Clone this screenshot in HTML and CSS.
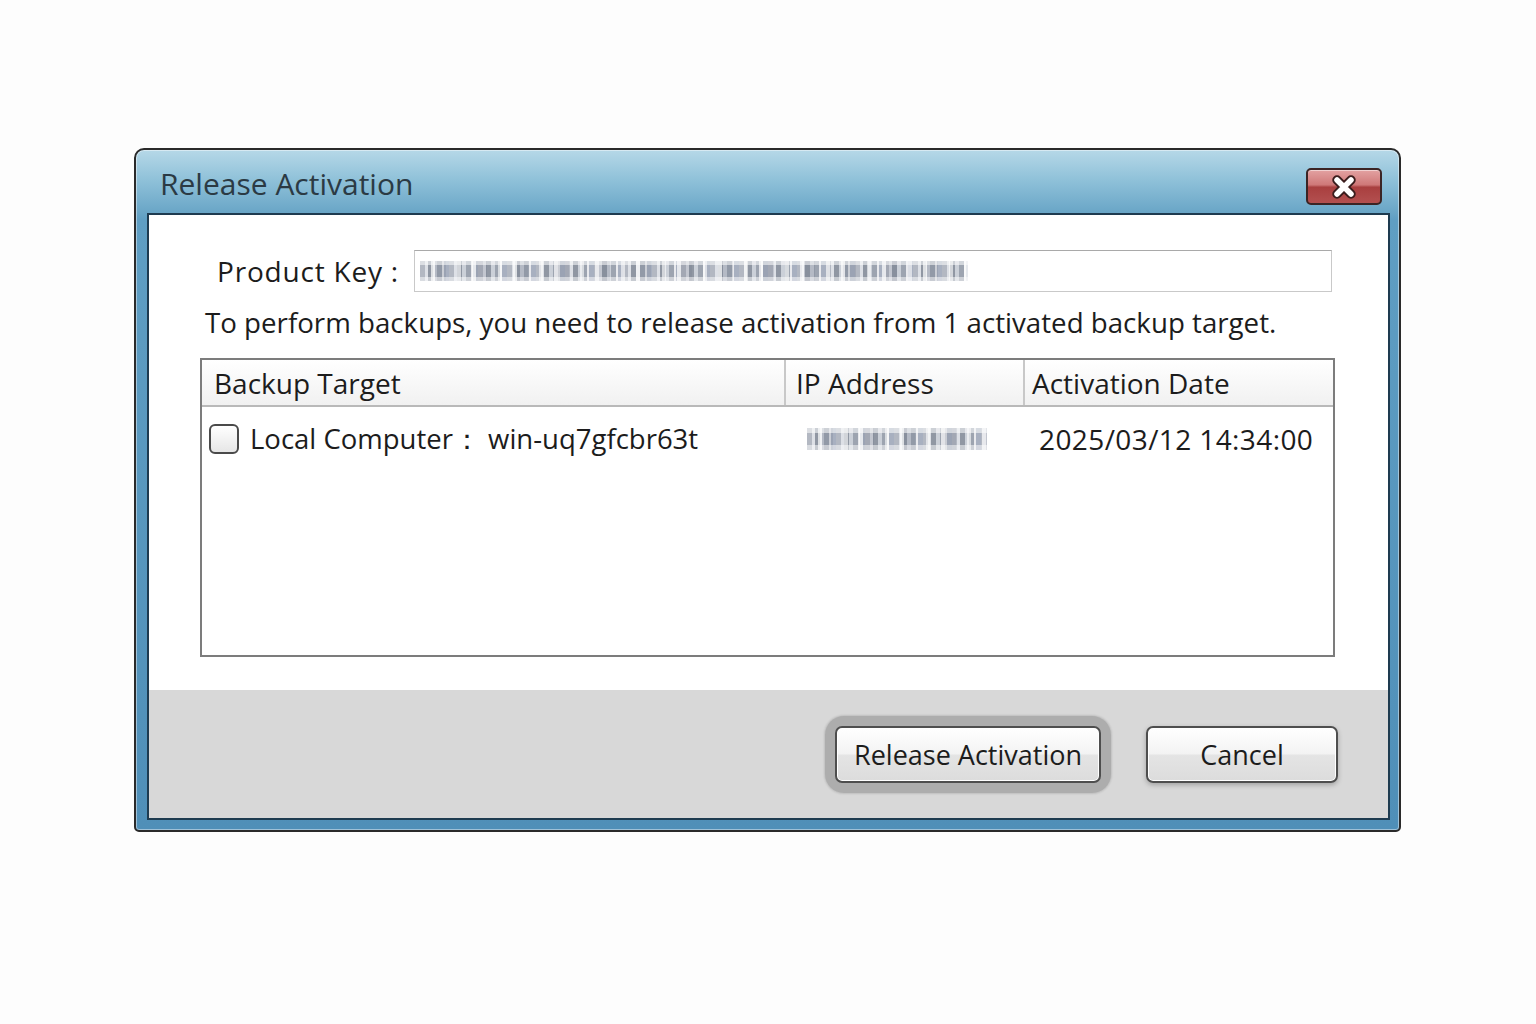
FILE: index.html
```
<!DOCTYPE html>
<html lang="en">
<head>
    <meta charset="UTF-8">
    <title>Release Activation</title>
    <link rel="stylesheet" href="styles.css">
</head>
<body>
    <div class="window">
        <div class="titlebar">
            <span class="title">Release Activation</span>
            <button class="close-btn" aria-label="Close">
                <svg width="30" height="26" viewBox="0 0 30 26">
                    <path d="M8 6 L22 20 M22 6 L8 20" stroke="#3a1d1d" stroke-width="9.5" stroke-linecap="round"/>
                    <path d="M8 6 L22 20 M22 6 L8 20" stroke="#ffffff" stroke-width="5.5" stroke-linecap="round"/>
                </svg>
            </button>
        </div>

        <div class="client">
            <div class="content">
                <div class="key-row">
                    <span class="key-label">Product Key :</span>
                    <div class="key-input">
                        <span class="mosaic key-mosaic"></span>
                    </div>
                </div>

                <p class="message">To perform backups, you need to release activation from 1 activated backup target.</p>

                <div class="list">
                    <div class="list-header">
                        <div class="col col-target">Backup Target</div>
                        <div class="col col-ip">IP Address</div>
                        <div class="col col-date">Activation Date</div>
                    </div>
                    <div class="list-row">
                        <div class="col col-target">
                            <span class="checkbox"></span>
                            <span>Local Computer：&nbsp;win-uq7gfcbr63t</span>
                        </div>
                        <div class="col col-ip">
                            <span class="mosaic ip-mosaic"></span>
                        </div>
                        <div class="col col-date">2025/03/12 14:34:00</div>
                    </div>
                </div>
            </div>

            <div class="footer">
                <div class="focus-ring">
                    <button class="btn">Release Activation</button>
                </div>
                <button class="btn btn-cancel">Cancel</button>
            </div>
        </div>
    </div>
</body>
</html>
```

FILE: styles.css
```
body {
    margin: 0;
    background-color: #fdfdfd;
    font-family: 'Open Sans', 'Noto Sans', sans-serif;
    color: #1c1c1c;
}
.window {
    box-sizing: border-box;
    margin: 148px 0 0 134px;
    width: 1267px;
    border: 2px solid #2a2a2a;
    border-radius: 10px 10px 5px 5px;
    background: linear-gradient(to bottom, #b6d8e8 0px, #8fc1d9 30px, #6aa6c7 62px, #5f9ec3 70px, #4f8fb8 100%);
    padding: 0 9px 10px 11px;
    box-shadow: inset 0 0 0 1px rgba(255,255,255,0.45);
}
.titlebar {
    height: 63px;
    display: flex;
    align-items: flex-start;
    justify-content: space-between;
    padding-left: 13px;
    padding-right: 8px;
}
.title {
    margin-top: 15px;
    font-size: 30px;
    color: #2b3a44;
    line-height: 38px;
}
.close-btn {
    margin-top: 18px;
    width: 76px;
    height: 37px;
    border: 2px solid #3b2424;
    border-radius: 5px;
    background: linear-gradient(to bottom, #e3a2a2 0%, #cf7878 45%, #a93f3f 52%, #b35050 100%);
    display: flex;
    align-items: center;
    justify-content: center;
    padding: 0;
    box-shadow: inset 0 1px 0 rgba(255,255,255,0.5);
}
.client {
    border: 2px solid #1e3b50;
    background-color: #ffffff;
}
.content {
    padding: 35px 53px 33px 51px;
}
.key-row {
    display: flex;
    align-items: center;
    gap: 15px;
    padding-left: 17px;
    padding-right: 3px;
}
.key-label {
    font-size: 28px;
    letter-spacing: 0.8px;
    white-space: nowrap;
}
.key-input {
    flex: 1;
    height: 40px;
    border: 1px solid #c9c9c9;
    border-top-color: #a9a9a9;
    display: flex;
    align-items: center;
    padding-left: 5px;
}
.mosaic {
    display: inline-block;
    opacity: 0.85;
    background:
        linear-gradient(to bottom, rgba(255,255,255,0.55) 0 22%, rgba(255,255,255,0) 22% 78%, rgba(255,255,255,0.5) 78%),
        repeating-linear-gradient(90deg, rgba(255,255,255,0) 0 11px, rgba(255,255,255,0.7) 11px 15px, rgba(90,100,120,0.25) 15px 26px, rgba(255,255,255,0) 26px 37px, rgba(255,255,255,0.6) 37px 41px),
        repeating-linear-gradient(90deg, #a6acb8 0 5px, #d8dbe2 5px 8px, #7d8594 8px 13px, #c3c8d2 13px 17px, #8c95a3 17px 22px, #e4e6ea 22px 24px, #9aa3b6 24px 29px);
}
.key-mosaic {
    width: 548px;
    height: 20px;
}
.message {
    margin: 12px 0 0 5px;
    font-size: 27.7px;
    line-height: 36px;
}
.list {
    margin-top: 18px;
    height: 295px;
    border: 2px solid #7c7c7c;
}
.list-header {
    display: flex;
    height: 45px;
    border-bottom: 2px solid #b9b9b9;
    background: linear-gradient(to bottom, #ffffff, #f1f1f1);
    font-size: 28px;
}
.list-header .col {
    display: flex;
    align-items: center;
    border-right: 2px solid #c8c8c8;
    padding-left: 12px;
}
.list-header .col-ip {
    padding-left: 10px;
}
.list-header .col-date {
    border-right: none;
    padding-left: 7px;
}
.col-target {
    width: 584px;
    box-sizing: border-box;
}
.col-ip {
    width: 239px;
    box-sizing: border-box;
}
.col-date {
    flex: 1;
}
.list-row {
    display: flex;
    align-items: center;
    margin-top: 17px;
    font-size: 27.5px;
    height: 30px;
}
.list-row .col-target {
    display: flex;
    align-items: center;
    gap: 11px;
    padding-left: 7px;
}
.list-row .col-ip {
    padding-left: 21px;
    display: flex;
    align-items: center;
}
.list-row .col-date {
    padding-left: 14px;
    font-size: 28px;
    letter-spacing: 0.4px;
}
.checkbox {
    width: 26px;
    height: 26px;
    border: 2px solid #4a4a4a;
    border-radius: 6px;
    background: linear-gradient(to bottom, #ffffff, #e6e6e6);
}
.ip-mosaic {
    width: 180px;
    height: 22px;
}
.footer {
    height: 128px;
    background-color: #d8d8d8;
    display: flex;
    align-items: flex-start;
    justify-content: flex-end;
    gap: 45px;
    padding: 36px 50px 0 0;
    box-sizing: border-box;
}
.focus-ring {
    border-radius: 9px;
    box-shadow: 0 0 0 10px #adadad, 0 0 2px 11px rgba(0,0,0,0.12);
}
.btn {
    font-family: 'Open Sans', 'Noto Sans', sans-serif;
    font-size: 27px;
    color: #1c1c1c;
    height: 57px;
    width: 266px;
    border: 2px solid #4e4e4e;
    border-radius: 7px;
    background: linear-gradient(to bottom, #ffffff 0%, #f3f3f3 48%, #e4e4e4 52%, #dcdcdc 100%);
    display: block;
    padding: 0;
    box-shadow: inset 0 0 0 1px #ffffff;
}
.btn-cancel {
    width: 192px;
    box-shadow: inset 0 0 0 1px #ffffff, 0 2px 5px rgba(0,0,0,0.25);
}
```
